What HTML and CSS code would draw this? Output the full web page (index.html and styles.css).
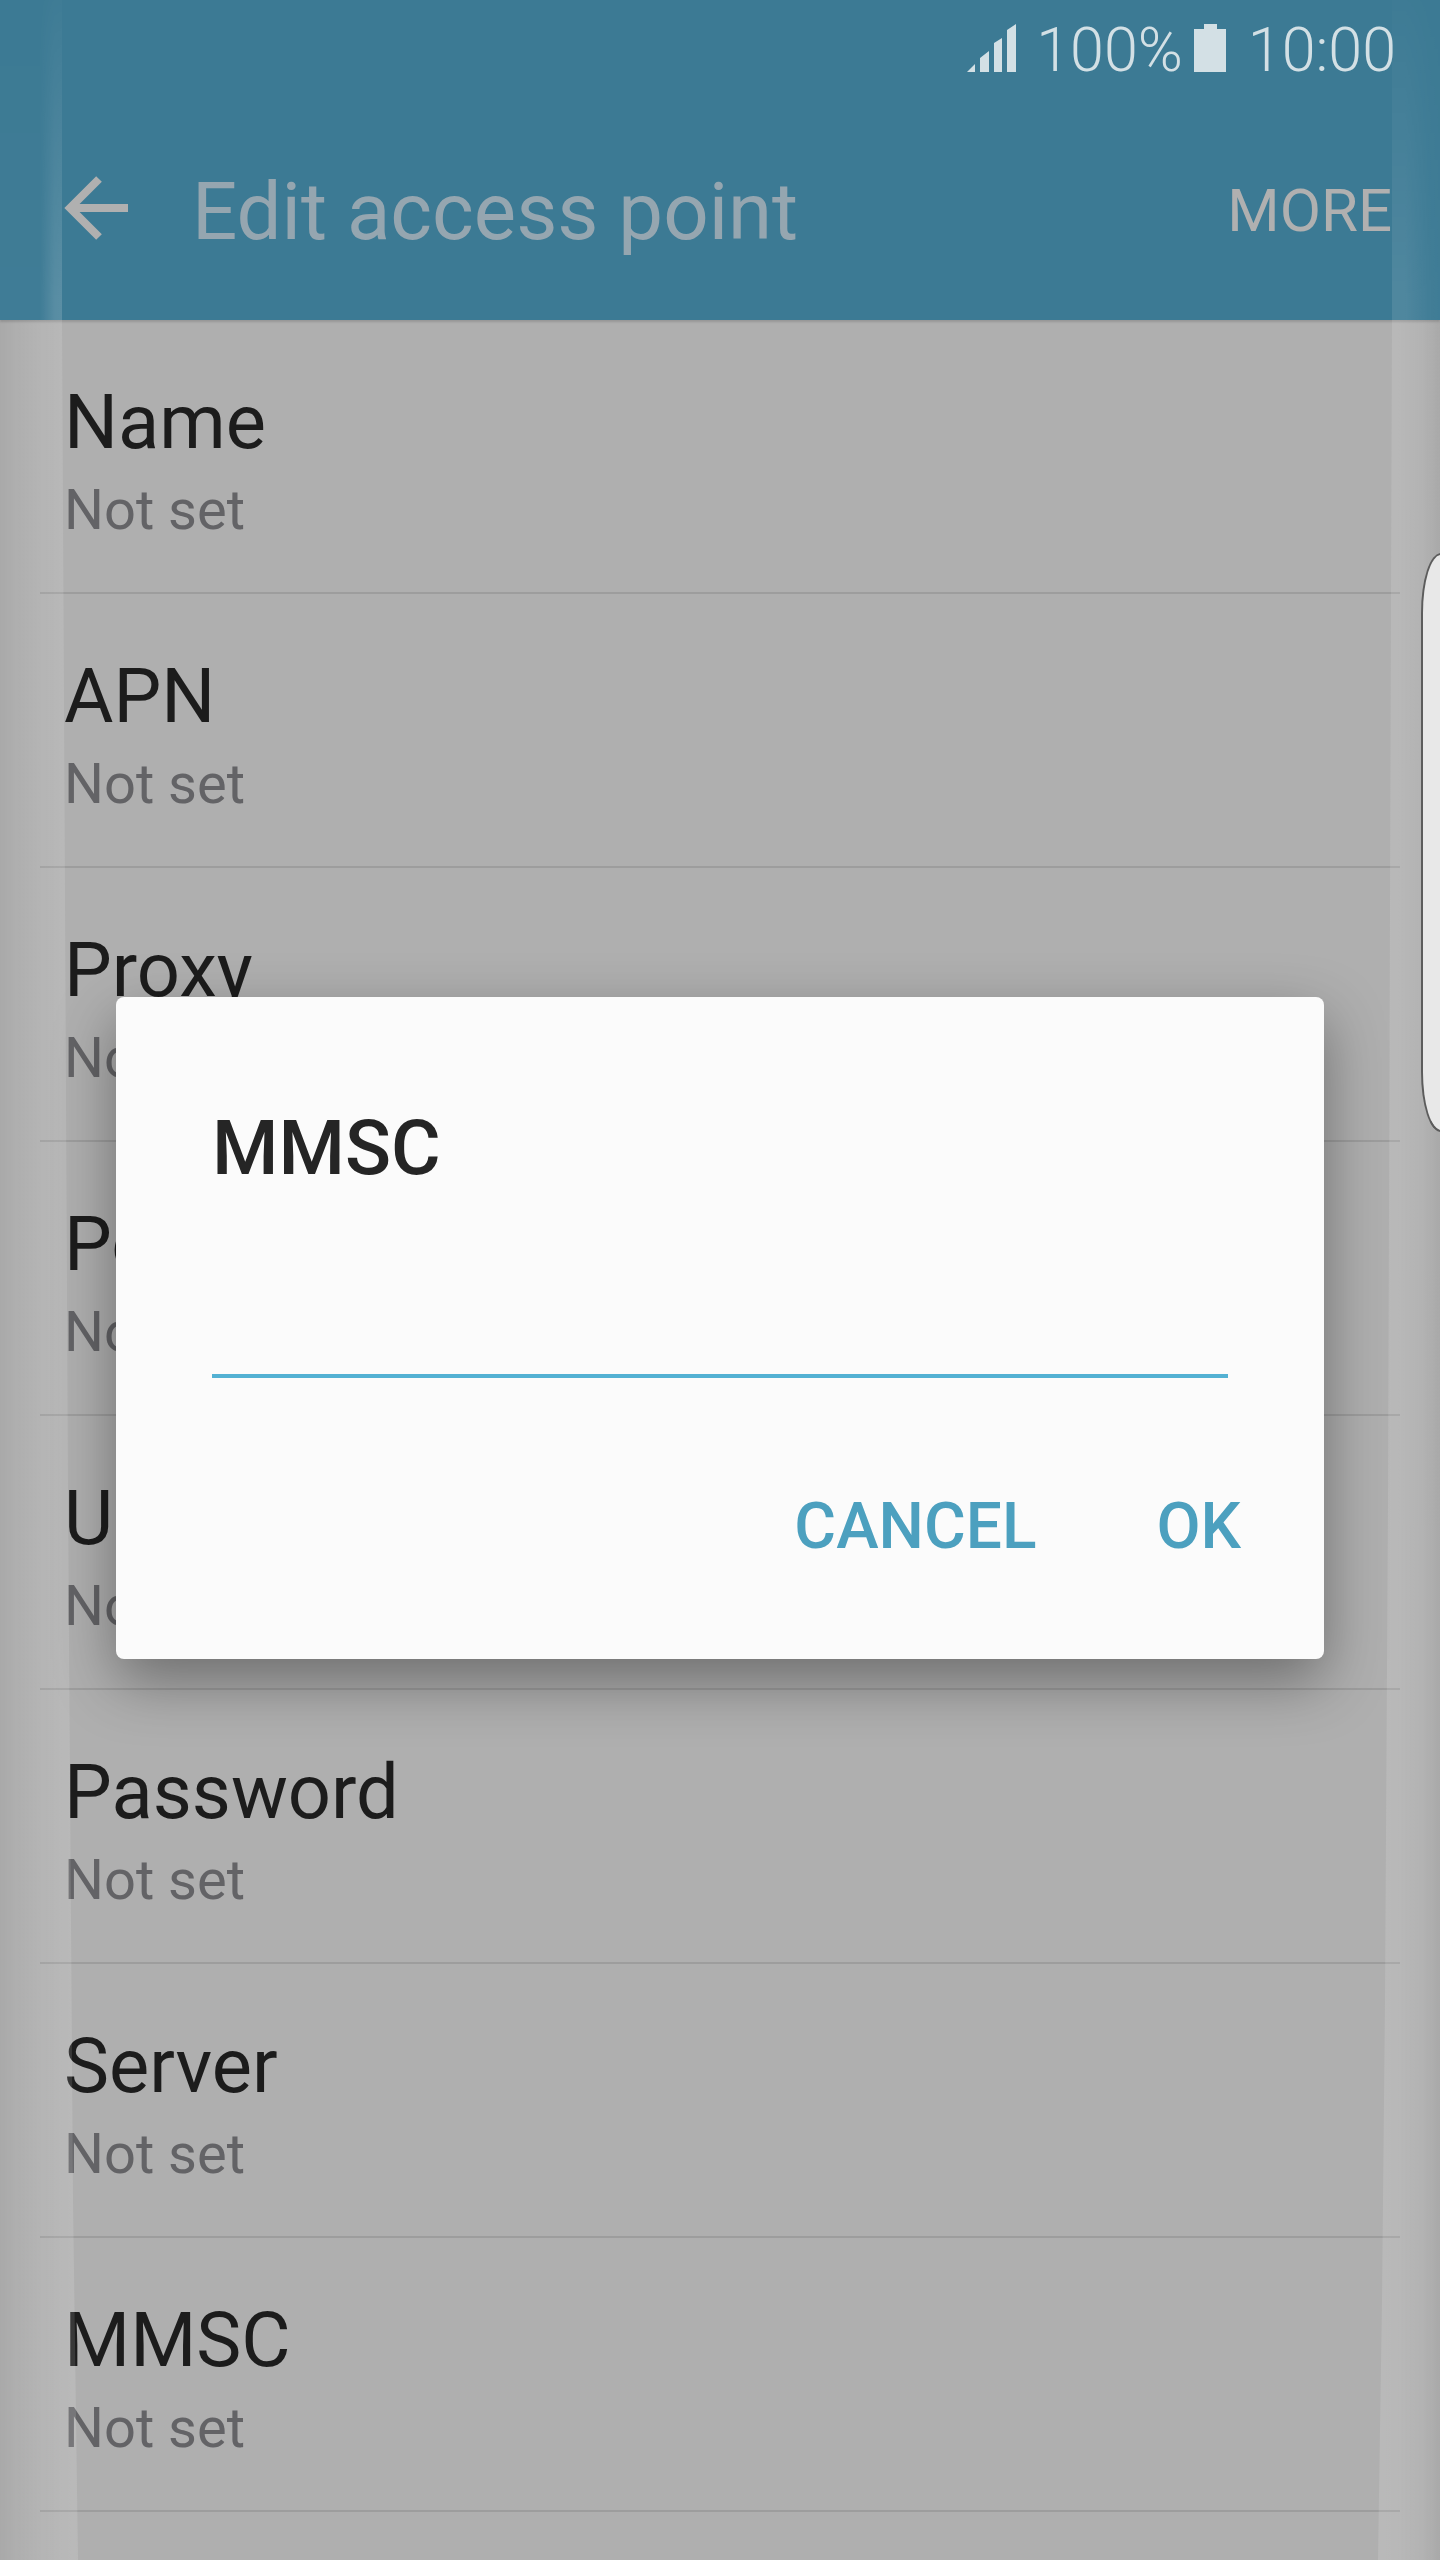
FILE: index.html
```html
<!DOCTYPE html>
<html lang="en">
<head>
<meta charset="utf-8">
<title>Edit access point</title>
<link rel="stylesheet" href="styles.css">
</head>
<body>
<div class="screen">
  <header class="appbar">
    <div class="status">
      <svg class="signal" viewBox="0 0 49 48" aria-hidden="true">
        <path d="M0 48 8 40V48Z M13 48V34L22 27V48Z M27 48V19L35 14V48Z M40 48V6L49 0V48Z"/>
      </svg>
      <span class="status-pct">100%</span>
      <svg class="battery" viewBox="0 0 32 48" aria-hidden="true">
        <path d="M10 0H23V5H32V48H0V5H10Z"/>
      </svg>
      <span class="status-time">10:00</span>
    </div>
    <div class="toolbar">
      <svg class="back" viewBox="0 0 64 66" aria-hidden="true">
        <path d="M64 33H6 M35 4 6 33 35 62" fill="none" stroke-width="8"/>
      </svg>
      <h1 class="title">Edit access point</h1>
      <span class="more">MORE</span>
    </div>
  </header>

  <main class="list">
    <div class="row"><div class="row-title">Name</div><div class="row-sub">Not set</div></div>
    <div class="row"><div class="row-title">APN</div><div class="row-sub">Not set</div></div>
    <div class="row"><div class="row-title">Proxy</div><div class="row-sub">Not set</div></div>
    <div class="row"><div class="row-title">Port</div><div class="row-sub">Not set</div></div>
    <div class="row"><div class="row-title">Username</div><div class="row-sub">Not set</div></div>
    <div class="row"><div class="row-title">Password</div><div class="row-sub">Not set</div></div>
    <div class="row"><div class="row-title">Server</div><div class="row-sub">Not set</div></div>
    <div class="row"><div class="row-title">MMSC</div><div class="row-sub">Not set</div></div>
  </main>

  <div class="edge edge-left"></div>
  <div class="edge edge-right"></div>
  <div class="handle"></div>

  <section class="dialog">
    <h2 class="dialog-title">MMSC</h2>
    <div class="dialog-field"></div>
    <div class="dialog-actions">
      <span class="dialog-btn">CANCEL</span>
      <span class="dialog-btn">OK</span>
    </div>
  </section>
</div>
</body>
</html>
```
FILE: styles.css
```css
* { box-sizing: border-box; }
html, body { margin: 0; padding: 0; }
body { font-family: Roboto, "Liberation Sans", sans-serif; }

.screen {
  position: relative;
  width: 1440px;
  height: 2560px;
  overflow: hidden;
  background: #afafaf;
}

/* App bar */
.appbar {
  position: relative;
  height: 320px;
  background: #3c7a94;
  box-shadow: 0 2px 2px rgba(0, 0, 0, .14);
  display: flex;
  flex-direction: column;
}
.status {
  height: 100px;
  display: flex;
  align-items: flex-start;
  justify-content: flex-end;
  padding: 20px 44px 0 0;
  color: #d3e0e5;
  font-size: 61px;
  font-weight: 300;
  line-height: 60px;
}
.signal { width: 49px; height: 48px; margin: 4px 20px 0 0; fill: #d3e0e5; }
.battery { width: 32px; height: 48px; margin: 4px 0 0 11px; fill: #d3e0e5; }
.status-time { margin-left: 22px; }

.toolbar {
  flex: 1;
  display: flex;
  align-items: center;
  padding: 0 48px 0 64px;
}
.back { width: 64px; height: 66px; flex: none; stroke: #b0b0b0; margin-top: -4px; }
.title {
  flex: 1;
  margin: 4px 0 0 64px;
  color: #95a6b0;
  font-size: 79.8px;
  font-weight: 400;
  line-height: 80px;
}
.more { color: #b0b0b0; font-size: 60px; line-height: 60px; margin-top: 2px; }

/* List */
.row {
  height: 274px;
  margin: 0 40px;
  padding: 57px 0 0 24px;
  border-bottom: 2px solid #9d9d9d;
}
.row-title { color: #1c1c1c; font-size: 75.8px; line-height: 92px; }
.row-sub { margin-top: 6px; color: #636366; font-size: 56px; line-height: 70px; }

/* Curved screen edges */
.edge { position: absolute; top: 0; bottom: 0; pointer-events: none; background-repeat: no-repeat; }
.edge-left {
  left: 0;
  width: 80px;
  background-image:
    linear-gradient(90deg, rgba(255, 255, 255, .02) 0, rgba(255, 255, 255, .02) 50%, rgba(255, 255, 255, .14) 68%, rgba(255, 255, 255, .16) 78%),
    linear-gradient(90deg, rgba(0, 0, 0, .03) 0, rgba(255, 255, 255, 0) 20%, rgba(255, 255, 255, .07) 50%, rgba(255, 255, 255, .12) 80%, rgba(255, 255, 255, .13) 100%);
  background-size: 100% 320px, 100% 2240px;
  background-position: 0 0, 0 320px;
  clip-path: polygon(0 0, 62px 0, 62px 320px, 65px 900px, 68px 1500px, 73px 2200px, 78px 2560px, 0 2560px);
  -webkit-mask-image: linear-gradient(180deg, rgba(0, 0, 0, .1) 0, #000 300px);
  mask-image: linear-gradient(180deg, rgba(0, 0, 0, .1) 0, #000 300px);
}
.edge-right {
  right: 0;
  width: 70px;
  background-image:
    linear-gradient(90deg, rgba(255, 255, 255, .1) 0, rgba(255, 255, 255, .1) 50%, rgba(255, 255, 255, .03) 85%, rgba(255, 255, 255, .02) 100%),
    linear-gradient(90deg, rgba(255, 255, 255, .13) 0, rgba(255, 255, 255, .12) 40%, rgba(255, 255, 255, .05) 75%, rgba(0, 0, 0, .03) 100%);
  background-size: 100% 320px, 100% 2240px;
  background-position: 0 0, 0 320px;
  clip-path: polygon(22px 0, 70px 0, 70px 2560px, 8px 2560px, 12px 2300px, 15px 2000px, 18px 1500px, 22px 320px);
  -webkit-mask-image: linear-gradient(180deg, rgba(0, 0, 0, .1) 0, #000 300px);
  mask-image: linear-gradient(180deg, rgba(0, 0, 0, .1) 0, #000 300px);
}
.handle {
  position: absolute;
  top: 553px;
  right: -2px;
  width: 21px;
  height: 579px;
  background: #e8e8e8;
  border: 2px solid #5c5c5c;
  border-radius: 20px 0 0 20px / 60px 0 0 60px;
}

/* Dialog */
.dialog {
  position: absolute;
  top: 997px;
  left: 116px;
  width: 1208px;
  height: 662px;
  padding: 106px 96px 0;
  background: #fbfbfb;
  border-radius: 8px;
  box-shadow: 0 22px 60px rgba(0, 0, 0, .38);
}
.dialog-title {
  margin: 0;
  color: #252525;
  font-size: 76px;
  font-weight: 500;
  line-height: 90px;
}
.dialog-field { height: 185px; border-bottom: 4px solid #53b1d3; }
.dialog-actions {
  display: flex;
  justify-content: flex-end;
  gap: 120px;
  margin: 114px -13px 0 0;
}
.dialog-btn { color: #4ca0bf; font-size: 64px; font-weight: 500; line-height: 70px; }
```
